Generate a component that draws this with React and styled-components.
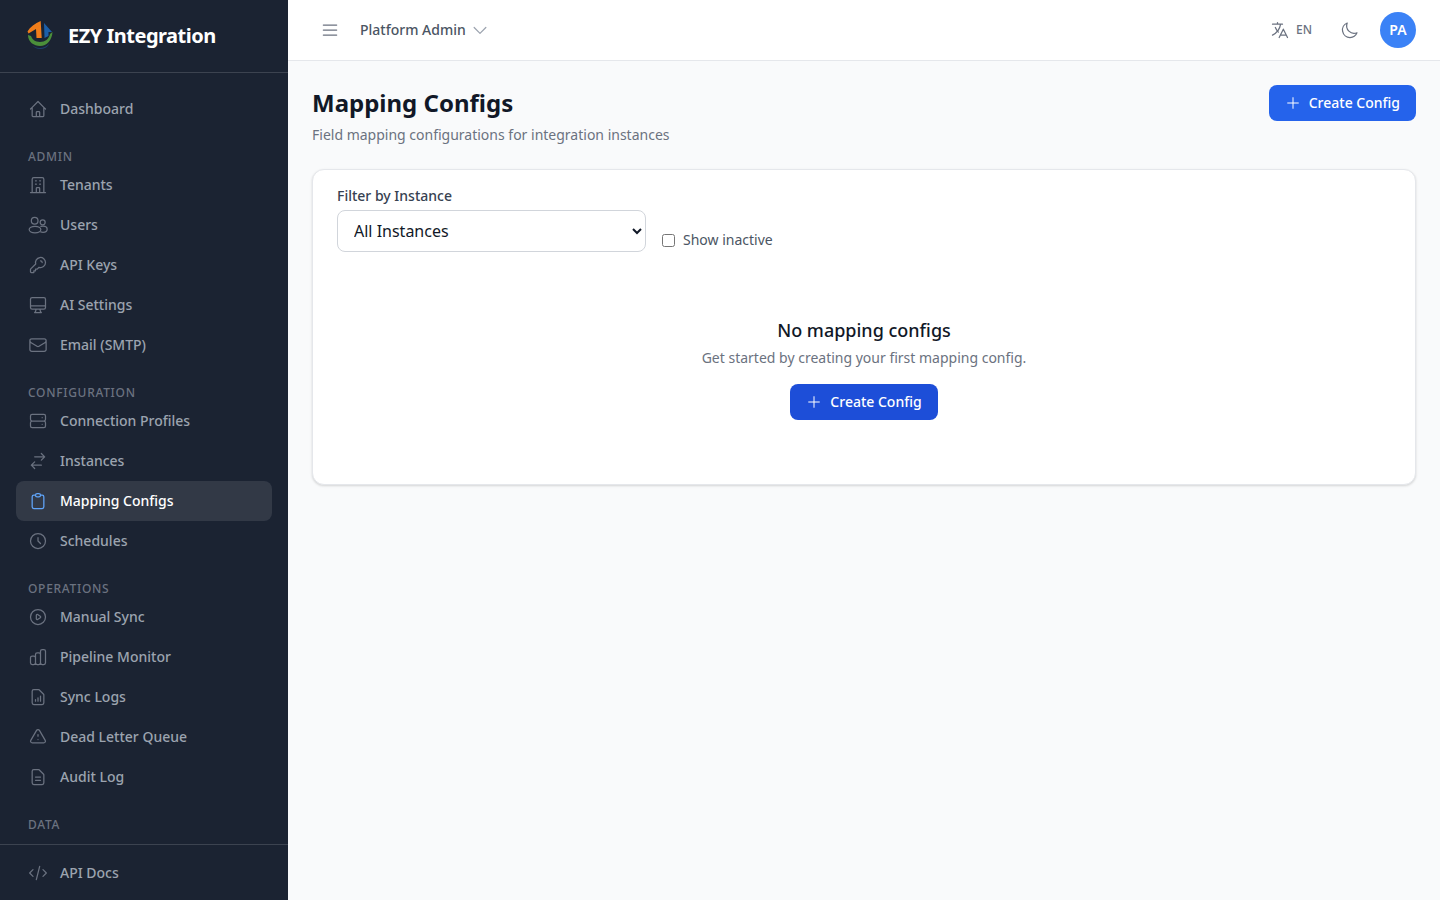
import React from 'react';
import styled, { createGlobalStyle } from 'styled-components';
import {
  HiOutlineHome,
  HiOutlineOfficeBuilding,
  HiOutlineKey,
  HiOutlineDesktopComputer,
  HiOutlineServer,
  HiOutlineSwitchHorizontal,
  HiOutlineClipboard,
  HiOutlineClock,
  HiOutlinePlay,
  HiOutlineChartBar,
  HiOutlineDocumentReport,
  HiOutlineExclamation,
  HiOutlineDocumentText,
  HiOutlineCode,
  HiOutlineMenu,
  HiOutlineChevronDown,
  HiOutlineTranslate,
  HiOutlineMoon,
  HiOutlinePlus,
} from 'react-icons/hi';
import { HiOutlineEnvelope } from 'react-icons/hi2';

const GlobalStyle = createGlobalStyle`
  * { box-sizing: border-box; }
  html, body { margin: 0; height: 100%; }
  body {
    font-family: "Noto Sans", "Liberation Sans", sans-serif;
    background: #f9fafb;
  }
  button, select { font-family: inherit; }
  svg path { stroke-width: 1.5; }
`;

const Layout = styled.div`
  display: flex;
  height: 900px;
  overflow: hidden;
`;

const Sidebar = styled.aside`
  width: 288px;
  flex-shrink: 0;
  display: flex;
  flex-direction: column;
  background: #1b2332;
`;

const Brand = styled.div`
  height: 73px;
  flex-shrink: 0;
  display: flex;
  align-items: center;
  gap: 12px;
  padding: 0 24px;
  border-bottom: 1px solid rgba(255, 255, 255, 0.15);
`;

const BrandName = styled.span`
  font-size: 20px;
  line-height: 28px;
  font-weight: 700;
  letter-spacing: -0.5px;
  color: #fff;
`;

const Nav = styled.nav`
  flex: 1;
  min-height: 0;
  overflow: hidden;
  padding: 16px 16px 0;
`;

const SectionLabel = styled.div`
  margin-top: 20px;
  padding: 0 12px;
  font-size: 12px;
  line-height: 16px;
  font-weight: 500;
  letter-spacing: 0.7px;
  text-transform: uppercase;
  color: #6b7280;
`;

const NavItem = styled.a`
  display: flex;
  align-items: center;
  gap: 12px;
  height: 40px;
  padding: 0 12px;
  border-radius: 8px;
  font-size: 14px;
  line-height: 18px;
  font-weight: 500;
  color: ${({ $active }) => ($active ? '#fff' : '#9ca3af')};
  background: ${({ $active }) => ($active ? 'rgba(255, 255, 255, 0.1)' : 'transparent')};

  svg {
    width: 20px;
    height: 20px;
    flex-shrink: 0;
    color: ${({ $active }) => ($active ? '#60a5fa' : '#6b7280')};
  }
`;

const SidebarFooter = styled.div`
  height: 56px;
  flex-shrink: 0;
  padding: 8px 16px 0;
  border-top: 1px solid rgba(255, 255, 255, 0.15);
`;

const Main = styled.div`
  flex: 1;
  min-width: 0;
  display: flex;
  flex-direction: column;
`;

const Topbar = styled.header`
  height: 61px;
  flex-shrink: 0;
  display: flex;
  align-items: center;
  justify-content: space-between;
  padding: 0 24px 0 32px;
  background: #fff;
  border-bottom: 1px solid #e5e7eb;
`;

const TopGroup = styled.div`
  display: flex;
  align-items: center;
`;

const MenuIcon = styled(HiOutlineMenu)`
  width: 20px;
  height: 20px;
  color: #6b7280;
  margin-right: 20px;
`;

const TenantName = styled.span`
  font-size: 14px;
  line-height: 18px;
  font-weight: 500;
  color: #4b5563;
`;

const Chevron = styled(HiOutlineChevronDown)`
  width: 20px;
  height: 20px;
  margin-left: 4px;
  color: #9ca3af;
`;

const LangIcon = styled(HiOutlineTranslate)`
  width: 20px;
  height: 20px;
  color: #6b7280;
`;

const LangCode = styled.span`
  margin-left: 6px;
  font-size: 12px;
  line-height: 14px;
  font-weight: 500;
  color: #6b7280;
`;

const MoonIcon = styled(HiOutlineMoon)`
  width: 20px;
  height: 20px;
  color: #6b7280;
  margin-left: 28px;
`;

const Avatar = styled.div`
  width: 36px;
  height: 36px;
  margin-left: 20px;
  border-radius: 50%;
  display: flex;
  align-items: center;
  justify-content: center;
  background: #3b82f6;
  color: #fff;
  font-size: 14px;
  line-height: 18px;
  font-weight: 600;
`;

const Content = styled.main`
  flex: 1;
  padding: 24px;
  background: #f9fafb;
`;

const PageHead = styled.div`
  display: flex;
  align-items: flex-start;
  justify-content: space-between;
  margin-bottom: 24px;
`;

const Title = styled.h1`
  margin: 0;
  font-size: 24px;
  line-height: 36px;
  font-weight: 700;
  color: #111827;
`;

const Subtitle = styled.p`
  margin: 4px 0 0;
  font-size: 14px;
  line-height: 20px;
  color: #6b7280;
`;

const Button = styled.button`
  display: inline-flex;
  align-items: center;
  gap: 8px;
  height: 36px;
  padding: 0 16px;
  border: 0;
  border-radius: 8px;
  background: ${({ $dark }) => ($dark ? '#1d4ed8' : '#2563eb')};
  color: #fff;
  font-size: 14px;
  line-height: 18px;
  font-weight: 500;

  svg {
    width: 16px;
    height: 16px;
  }
`;

const Card = styled.section`
  height: 316px;
  padding: 16px 24px;
  background: #fff;
  border: 1px solid #e5e7eb;
  border-radius: 12px;
  box-shadow: 0 1px 3px rgba(0, 0, 0, 0.1), 0 1px 2px rgba(0, 0, 0, 0.06);
`;

const FilterRow = styled.div`
  display: flex;
  align-items: flex-end;
  gap: 16px;
`;

const FieldLabel = styled.label`
  display: block;
  margin-bottom: 4px;
  font-size: 14px;
  line-height: 20px;
  font-weight: 500;
  color: #374151;
`;

const Select = styled.select`
  display: block;
  width: 309px;
  height: 42px;
  padding: 0 12px;
  background: #fff;
  border: 1px solid #d1d5db;
  border-radius: 8px;
  font-size: 16px;
  color: #111827;
`;

const CheckLabel = styled.label`
  display: flex;
  align-items: center;
  gap: 8px;
  height: 24px;
  font-size: 14px;
  line-height: 18px;
  color: #4b5563;
`;

const Checkbox = styled.input`
  width: 13px;
  height: 13px;
  margin: 0;
`;

const Empty = styled.div`
  display: flex;
  flex-direction: column;
  align-items: center;
  margin-top: 64px;
`;

const EmptyTitle = styled.h3`
  margin: 0;
  font-size: 18px;
  line-height: 28px;
  font-weight: 500;
  color: #111827;
`;

const EmptyText = styled.p`
  margin: 4px 0 16px;
  font-size: 14px;
  line-height: 20px;
  color: #6b7280;
`;

const Logo = () => (
  <svg width="32" height="32" viewBox="0 0 32 32" fill="none">
    <path d="M8 25c4 4 12 4.500 17-1-1 3-5 5-9 5-3 0-6-1.500-8-4z" fill="#1e3f6b" />
    <path d="M4 15c0 7 6 11 12 11 7 0 12-6 12.500-14L26 14c-1 5-5 8-10 8-5 0-8-3-9-6z" fill="#4b8f3a" />
    <path d="M20 3l8 9h-3.500v4l-4 2z" fill="#1d5fa8" />
    <path d="M16.700 1l1 17h-5.200L12 9l-7.500 4.500-1-2C6 7 11 3.500 16.700 1z" fill="#f07d1a" />
  </svg>
);

const UsersIcon = () => (
  <svg viewBox="0 0 24 24" fill="none" stroke="currentColor" strokeLinecap="round" strokeLinejoin="round">
    <circle cx="8" cy="6.800" r="4" strokeWidth="1.500" />
    <circle cx="17.600" cy="8.800" r="3" strokeWidth="1.500" />
    <ellipse cx="8.400" cy="17.500" rx="7" ry="4" strokeWidth="1.500" />
    <path d="M15.500 13.700c.8-.3 1.600-.4 2.500-.4 3 0 5 1.700 5 3.700s-2 3.700-5 3.700c-1 0-2-.2-2.800-.5" />
  </svg>
);

const adminItems = [
  [HiOutlineOfficeBuilding, 'Tenants'],
  [UsersIcon, 'Users'],
  [HiOutlineKey, 'API Keys'],
  [HiOutlineDesktopComputer, 'AI Settings'],
  [HiOutlineEnvelope, 'Email (SMTP)'],
];

const configItems = [
  [HiOutlineServer, 'Connection Profiles'],
  [HiOutlineSwitchHorizontal, 'Instances'],
  [HiOutlineClipboard, 'Mapping Configs', true],
  [HiOutlineClock, 'Schedules'],
];

const opsItems = [
  [HiOutlinePlay, 'Manual Sync'],
  [HiOutlineChartBar, 'Pipeline Monitor'],
  [HiOutlineDocumentReport, 'Sync Logs'],
  [HiOutlineExclamation, 'Dead Letter Queue'],
  [HiOutlineDocumentText, 'Audit Log'],
];

const renderItems = (items) =>
  items.map(([Icon, label, active]) => (
    <NavItem key={label} $active={active}>
      <Icon />
      {label}
    </NavItem>
  ));

const App = () => (
  <Layout>
    <GlobalStyle />
    <Sidebar>
      <Brand>
        <Logo />
        <BrandName>EZY Integration</BrandName>
      </Brand>
      <Nav>
        <NavItem>
          <HiOutlineHome />
          Dashboard
        </NavItem>
        <SectionLabel>Admin</SectionLabel>
        {renderItems(adminItems)}
        <SectionLabel>Configuration</SectionLabel>
        {renderItems(configItems)}
        <SectionLabel>Operations</SectionLabel>
        {renderItems(opsItems)}
        <SectionLabel>Data</SectionLabel>
      </Nav>
      <SidebarFooter>
        <NavItem>
          <HiOutlineCode />
          API Docs
        </NavItem>
      </SidebarFooter>
    </Sidebar>
    <Main>
      <Topbar>
        <TopGroup>
          <MenuIcon />
          <TenantName>Platform Admin</TenantName>
          <Chevron />
        </TopGroup>
        <TopGroup>
          <LangIcon />
          <LangCode>EN</LangCode>
          <MoonIcon />
          <Avatar>PA</Avatar>
        </TopGroup>
      </Topbar>
      <Content>
        <PageHead>
          <div>
            <Title>Mapping Configs</Title>
            <Subtitle>Field mapping configurations for integration instances</Subtitle>
          </div>
          <Button>
            <HiOutlinePlus />
            Create Config
          </Button>
        </PageHead>
        <Card>
          <FilterRow>
            <div>
              <FieldLabel>Filter by Instance</FieldLabel>
              <Select defaultValue="all">
                <option value="all">All Instances</option>
              </Select>
            </div>
            <CheckLabel>
              <Checkbox type="checkbox" />
              Show inactive
            </CheckLabel>
          </FilterRow>
          <Empty>
            <EmptyTitle>No mapping configs</EmptyTitle>
            <EmptyText>Get started by creating your first mapping config.</EmptyText>
            <Button $dark>
              <HiOutlinePlus />
              Create Config
            </Button>
          </Empty>
        </Card>
      </Content>
    </Main>
  </Layout>
);

export default App;
